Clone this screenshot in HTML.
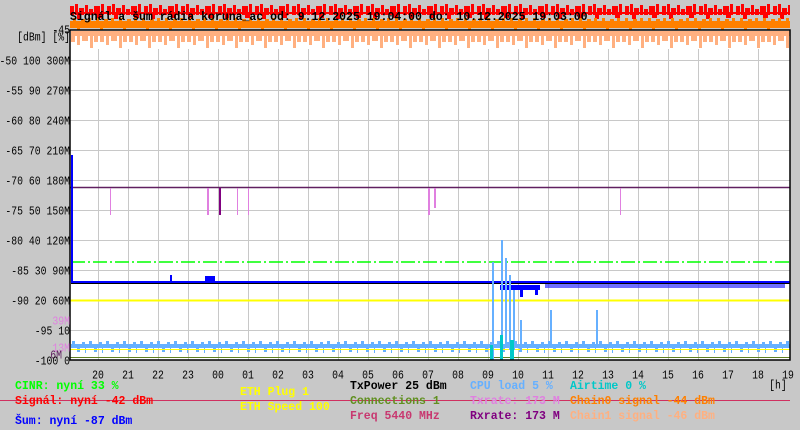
<!DOCTYPE html>
<html><head><meta charset="utf-8"><style>
body{margin:0;width:800px;height:430px;background:#c8c8c8;overflow:hidden;position:relative;font-family:"Liberation Mono","DejaVu Sans Mono",monospace;}
.t{position:absolute;white-space:pre;font-weight:bold;font-size:11.5px;line-height:12px;}
.ax{position:absolute;white-space:pre;font-size:9.8px;line-height:11px;color:#000;transform:scaleY(1.25);transform-origin:right center;}
.h{position:absolute;top:370px;font-size:9.8px;line-height:11px;width:20px;text-align:center;transform:scaleY(1.25);}
</style></head><body>
<svg width="800" height="430" style="position:absolute;left:0;top:0" xmlns="http://www.w3.org/2000/svg">
<defs>
<pattern id="red" width="37" height="20" patternUnits="userSpaceOnUse" x="70" y="4">
<rect x="0" y="2" width="4" height="9" fill="#f00"/><rect x="5" y="0" width="3" height="11" fill="#f00"/><rect x="9" y="4" width="5" height="7" fill="#f00"/><rect x="15" y="1" width="3" height="10" fill="#f00"/><rect x="19" y="5" width="4" height="6" fill="#f00"/><rect x="24" y="2" width="6" height="9" fill="#f00"/><rect x="31" y="0" width="3" height="11" fill="#f00"/><rect x="7" y="9" width="4" height="6" fill="#f00"/><rect x="27" y="9" width="5" height="5" fill="#f00"/>
</pattern>
<pattern id="org" width="23" height="14" patternUnits="userSpaceOnUse" x="70" y="18">
<rect x="0" y="3" width="23" height="7" fill="#ff8000"/><rect x="3" y="0" width="3" height="3" fill="#ff8000"/><rect x="11" y="1" width="4" height="2" fill="#ff8000"/><rect x="18" y="0" width="3" height="3" fill="#ff8000"/><rect x="7" y="10" width="3" height="3" fill="#ff8000"/>
</pattern>
<pattern id="lorg" width="29" height="18" patternUnits="userSpaceOnUse" x="70" y="31">
<rect x="0" y="0" width="29" height="5" fill="#ffb080"/><rect x="1" y="5" width="4" height="6" fill="#ffb080"/><rect x="7" y="5" width="3" height="9" fill="#ffb080"/><rect x="12" y="5" width="6" height="5" fill="#ffb080"/><rect x="20" y="5" width="3" height="12" fill="#ffb080"/><rect x="24" y="5" width="4" height="6" fill="#ffb080"/>
</pattern>
<pattern id="lb" width="17" height="14" patternUnits="userSpaceOnUse" x="70" y="340">
<rect x="0" y="4" width="17" height="4" fill="#66b0ff"/><rect x="2" y="1" width="3" height="3" fill="#66b0ff"/><rect x="7" y="8" width="3" height="4" fill="#66b0ff"/><rect x="12" y="2" width="3" height="2" fill="#66b0ff"/><rect x="15" y="8" width="1" height="5" fill="#66b0ff"/>
</pattern>
</defs>
<rect x="70" y="4" width="720" height="20" fill="url(#red)"/>
<rect x="70" y="12" width="720" height="2" fill="#f00"/>
<rect x="70" y="18" width="720" height="13" fill="url(#org)"/>
<rect x="70" y="30" width="720" height="330" fill="#fff"/>
<rect x="71" y="31" width="719" height="18" fill="url(#lorg)"/>
<g stroke="#c8c8c8" stroke-width="1">
<path d="M98.5 49V360M128.5 49V360M158.5 49V360M188.5 49V360M218.5 49V360M248.5 49V360M278.5 49V360M308.5 49V360M338.5 49V360M368.5 49V360M398.5 49V360M428.5 49V360M458.5 49V360M488.5 49V360M518.5 49V360M548.5 49V360M578.5 49V360M608.5 49V360M638.5 49V360M668.5 49V360M698.5 49V360M728.5 49V360M758.5 49V360"/>
<path d="M70 60.5H790M70 90.5H790M70 120.5H790M70 150.5H790M70 180.5H790M70 210.5H790M70 240.5H790M70 270.5H790M70 300.5H790M70 330.5H790"/>
</g>
<path d="M70 187.5H790" stroke="#602060" stroke-width="1.5"/>
<g fill="#e080e0"><rect x="110" y="188" width="1" height="27"/><rect x="207" y="188" width="2" height="27"/><rect x="219" y="188" width="2" height="27" fill="#800080"/><rect x="237" y="188" width="1" height="27"/><rect x="248" y="188" width="1" height="27"/><rect x="428" y="188" width="2" height="27"/><rect x="434" y="188" width="2" height="20"/><rect x="620" y="188" width="1" height="27"/></g>
<path d="M71 262H790" stroke="#00ff00" stroke-width="1.5" stroke-dasharray="14 3 2 3"/>
<path d="M71 282H790" stroke="#0000ff" stroke-width="2"/>
<path d="M71 283.5H790" stroke="#000" stroke-width="1"/>
<g fill="#0000ff"><rect x="71" y="155" width="2" height="127"/><rect x="170" y="275" width="2" height="7"/><rect x="205" y="276" width="10" height="6"/><rect x="500" y="285" width="40" height="5"/><rect x="545" y="284" width="240" height="4" fill="#3030ff" opacity=".7"/><rect x="520" y="288" width="3" height="9"/><rect x="535" y="288" width="3" height="7"/></g>
<path d="M70 300.5H790" stroke="#ffff00" stroke-width="2"/>
<rect x="71" y="341" width="719" height="13" fill="url(#lb)"/>
<path d="M70 349.5H790" stroke="#ffff00" stroke-width="1"/>
<path d="M70 357.5H790" stroke="#608020" stroke-width="1"/>
<g fill="#66b0ff"><rect x="492" y="262" width="2" height="98"/><rect x="501" y="240" width="2" height="120"/><rect x="505" y="258" width="2" height="90"/><rect x="509" y="275" width="2" height="75"/><rect x="513" y="290" width="2" height="60"/><rect x="520" y="320" width="2" height="30"/><rect x="550" y="310" width="2" height="35"/><rect x="596" y="310" width="2" height="35"/></g>
<g fill="#00c8c8"><rect x="490" y="345" width="3" height="15"/><rect x="500" y="335" width="3" height="25"/><rect x="510" y="340" width="4" height="20"/></g>
<rect x="70" y="30" width="720" height="330" fill="none" stroke="#000" stroke-width="1.5"/>
<path d="M0 400.5H790" stroke="#d03060" stroke-width="1"/>
</svg>
<div class="t" style="left:70px;top:12px;color:#000">Signál a šum rádia koruna_ac od: 9.12.2025 19:04:00 do: 10.12.2025 19:03:00</div>
<div class="ax" style="right:730px;top:25px">-45</div>
<div class="ax" style="right:730px;top:32px">[dBm] [%]</div>
<div class="ax" style="right:730px;top:56px">-50 100 300M</div>
<div class="ax" style="right:730px;top:86px">-55 90 270M</div>
<div class="ax" style="right:730px;top:116px">-60 80 240M</div>
<div class="ax" style="right:730px;top:146px">-65 70 210M</div>
<div class="ax" style="right:730px;top:176px">-70 60 180M</div>
<div class="ax" style="right:730px;top:206px">-75 50 150M</div>
<div class="ax" style="right:730px;top:236px">-80 40 120M</div>
<div class="ax" style="right:730px;top:266px">-85 30 90M</div>
<div class="ax" style="right:730px;top:296px">-90 20 60M</div>
<div class="ax" style="right:730px;top:316px;color:#e080e0">39M</div>
<div class="ax" style="right:730px;top:326px">-95 10</div>
<div class="ax" style="right:730px;top:343px;color:#e080e0">13M</div>
<div class="ax" style="right:738px;top:350px;color:#602060">6M</div>
<div class="ax" style="right:730px;top:356px">-100 0</div>
<div class="h" style="left:88px">20</div><div class="h" style="left:118px">21</div><div class="h" style="left:148px">22</div><div class="h" style="left:178px">23</div><div class="h" style="left:208px">00</div><div class="h" style="left:238px">01</div><div class="h" style="left:268px">02</div><div class="h" style="left:298px">03</div><div class="h" style="left:328px">04</div><div class="h" style="left:358px">05</div><div class="h" style="left:388px">06</div><div class="h" style="left:418px">07</div><div class="h" style="left:448px">08</div><div class="h" style="left:478px">09</div><div class="h" style="left:508px">10</div><div class="h" style="left:538px">11</div><div class="h" style="left:568px">12</div><div class="h" style="left:598px">13</div><div class="h" style="left:628px">14</div><div class="h" style="left:658px">15</div><div class="h" style="left:688px">16</div><div class="h" style="left:718px">17</div><div class="h" style="left:748px">18</div><div class="h" style="left:778px">19</div>
<div class="h" style="left:768px;top:380px">[h]</div>
<div class="t" style="left:15px;top:381px;color:#00ff00">CINR: nyní 33 %</div>
<div class="t" style="left:15px;top:396px;color:#ff0000">Signál: nyní -42 dBm</div>
<div class="t" style="left:15px;top:416px;color:#0000ff">Šum: nyní -87 dBm</div>
<div class="t" style="left:240px;top:387px;color:#ffff00">ETH Plug 1</div>
<div class="t" style="left:240px;top:402px;color:#ffff00">ETH Speed 100</div>
<div class="t" style="left:350px;top:381px;color:#000">TxPower 25 dBm</div>
<div class="t" style="left:350px;top:396px;color:#609020">Connections 1</div>
<div class="t" style="left:350px;top:411px;color:#c83870">Freq 5440 MHz</div>
<div class="t" style="left:470px;top:381px;color:#66b0ff">CPU load 5 %</div>
<div class="t" style="left:470px;top:396px;color:#e080e0">Txrate: 173 M</div>
<div class="t" style="left:470px;top:411px;color:#800080">Rxrate: 173 M</div>
<div class="t" style="left:570px;top:381px;color:#00c8c8">Airtime 0 %</div>
<div class="t" style="left:570px;top:396px;color:#ff8000">Chain0 signal -44 dBm</div>
<div class="t" style="left:570px;top:411px;color:#ffb080">Chain1 signal -46 dBm</div>
</body></html>
